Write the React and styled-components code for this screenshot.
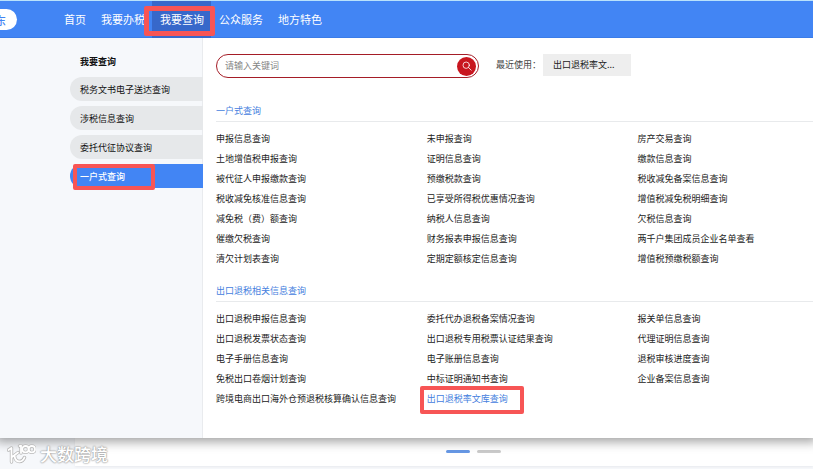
import React from "react";
import styled, { createGlobalStyle } from "styled-components";

const GlobalStyle = createGlobalStyle`
  *, *::before, *::after { box-sizing: border-box; }
  body {
    margin: 0;
    background: #ffffff;
    color: #222222;
    font: 9px/20px "Noto Sans CJK SC", sans-serif;
    overflow-x: hidden;
  }
  button, input { font: inherit; color: inherit; }
  a { color: inherit; text-decoration: none; white-space: nowrap; }
  ul { list-style: none; margin: 0; padding: 0; }
  h2, h3 { margin: 0; font-size: inherit; }
`;

const Header = styled.header`
  display: flex;
  align-items: stretch;
  height: 38px;
  border-top: 1px solid #b9e2fc;
  background: #4285f4;
  box-shadow: inset 0 -1px 0 #3b7ce8;
`;

const Region = styled.button`
  align-self: center;
  display: flex;
  align-items: center;
  justify-content: flex-end;
  width: 37px;
  height: 21px;
  margin-left: -20px;
  padding: 0 11px 0 0;
  border: 0;
  border-radius: 11px;
  background: #ffffff;
  color: #4285f4;
  font-size: 11px;
  font-weight: 500;
`;

const Nav = styled.nav`
  display: flex;
  margin-left: 39px;
`;

const NavLink = styled.a`
  position: relative;
  display: flex;
  align-items: center;
  padding: 0 7px 2px 8px;
  background: ${(p) => (p.$active ? "#3768ca" : "transparent")};
  color: #ffffff;
  font-size: 11px;
`;

const Callout = styled.span`
  position: absolute;
  z-index: 2;
  inset: ${(p) => p.$inset};
  border: ${(p) => p.$weight || 4}px solid #f75555;
  border-radius: 2px;
  pointer-events: none;
`;

const Panel = styled.div`
  position: relative;
  z-index: 1;
  display: grid;
  grid-template-columns: 203px minmax(0, 1fr);
  background: #ffffff;
  box-shadow: 0 0 10px 4px rgba(0, 0, 0, 0.36);
  clip-path: inset(0 0 -20px 0);
`;

const Sidebar = styled.aside`
  padding: 14px 0 0 70px;
  border-right: 1px solid #e9ebee;
  background: #f6f8fb;
`;

const SideTitle = styled.h2`
  padding-left: 10px;
  margin-bottom: 5px;
  color: #111111;
  font-weight: 700;
`;

const SideList = styled.ul`
  display: grid;
  gap: 5px;
  margin-right: -1px;
`;

const SideLink = styled.a`
  position: relative;
  display: block;
  height: 24px;
  padding: 1px 0 0 10px;
  border-radius: 12px 0 0 12px;
  background: ${(p) => (p.$active ? "#4285f4" : "#e6e8ea")};
  color: ${(p) => (p.$active ? "#ffffff" : "#111111")};
  font-weight: ${(p) => (p.$active ? 500 : 400)};
  line-height: 24px;
`;

const Content = styled.main`
  padding: 16px 0 29px 13px;
`;

const Toolbar = styled.div`
  display: flex;
  align-items: flex-start;
  margin-bottom: 23px;
`;

const SearchForm = styled.form`
  display: flex;
  align-items: center;
  width: 263px;
  height: 24px;
  padding: 0 2px 0 8px;
  border: 1px solid #a51d27;
  border-radius: 12px;
`;

const SearchInput = styled.input`
  flex: 1;
  min-width: 0;
  padding: 0;
  border: 0;
  outline: 0;
  background: transparent;
  &::placeholder { color: #858585; opacity: 1; }
`;

const SearchButton = styled.button`
  display: grid;
  place-items: center;
  width: 19px;
  height: 19px;
  padding: 0;
  border: 0;
  border-radius: 50%;
  background: #c8161f;
  color: #ffffff;
`;

const RecentLabel = styled.span`
  width: 47px;
  margin-left: 17px;
  color: #444444;
  line-height: 22px;
`;

const RecentChip = styled.button`
  width: 88px;
  height: 22px;
  padding: 0 10px;
  border: 0;
  background: #eeeeee;
  text-align: left;
`;

const Section = styled.section`
  & + & { margin-top: 12px; }
`;

const SectionTitle = styled.h3`
  border-bottom: 1px solid #e8eaec;
  margin-bottom: 7px;
  color: #4580de;
  font-weight: 400;
`;

const LinkGrid = styled.ul`
  display: grid;
  grid-template-columns: 6fr 6fr 5fr;
`;

const QueryLink = styled.a`
  position: relative;
  display: inline-block;
  color: ${(p) => (p.$active ? "#4580de" : "#222222")};
`;

const Footer = styled.footer`
  display: grid;
  grid-template-columns: 75px minmax(0, 1fr);
  height: 31px;
  background: #f6f8fb;
`;

const Brand = styled.div`
  position: relative;
  z-index: 2;
  display: flex;
  align-items: center;
  gap: 4px;
  padding-left: 7px;
  color: #ffffff;
  font-size: 17px;
  font-weight: 500;
  line-height: 28px;
  white-space: nowrap;
  text-shadow: 0 0 1px #a0a0a0, 0 0 2px #a0a0a0, 0 0 2px #b0b0b0;
`;

const Carousel = styled.div`
  display: flex;
  align-items: center;
  justify-content: center;
  gap: 7px;
  height: 28px;
  padding: 0 0 2px 58px;
  background: #ffffff;
  box-shadow: 0 1px 2px #e8eaed;
`;

const CarouselDot = styled.button`
  width: 24px;
  height: 3px;
  padding: 0;
  border: 0;
  border-radius: 2px;
  background: ${(p) => (p.$active ? "#6798e5" : "#cbcbcb")};
`;

const Mark = styled.svg`
  flex: none;
`;

function SearchIcon() {
  return (
    <svg width="10" height="10" viewBox="0 0 10 10" fill="none" stroke="currentColor" strokeWidth="0.8" strokeLinecap="round" aria-hidden="true">
      <circle cx="4.2" cy="4.2" r="3.2" />
      <path d="M6.6 6.6L9.2 9.2" />
    </svg>
  );
}

function BrandMark() {
  const lines = (
    <>
      <path d="M1.5 6L4.5 4V18M11 8.5L5 13M7.5 12C8 15.5 10 17.5 12.5 17.5C15 17.5 16.5 16 17.5 13.5" />
      <path d="M12.5 2L14 1.5V9" />
      <circle cx="18.5" cy="5.2" r="3.2" />
      <circle cx="24.8" cy="5.2" r="3.2" />
    </>
  );
  return (
    <Mark width="29" height="20" viewBox="0 0 29 20" fill="none" strokeLinecap="round" strokeLinejoin="round" aria-hidden="true">
      <g stroke="#b8b8b8" strokeWidth="3.4">{lines}</g>
      <g stroke="#ffffff" strokeWidth="1.8">{lines}</g>
    </Mark>
  );
}

const navItems = ["首页", "我要办税", "我要查询", "公众服务", "地方特色"];
const sideItems = ["税务文书电子送达查询", "涉税信息查询", "委托代征协议查询", "一户式查询"];
const sections = [
  {
    title: "一户式查询",
    links: [
      "申报信息查询", "未申报查询", "房产交易查询",
      "土地增值税申报查询", "证明信息查询", "缴款信息查询",
      "被代征人申报缴款查询", "预缴税款查询", "税收减免备案信息查询",
      "税收减免核准信息查询", "已享受所得税优惠情况查询", "增值税减免税明细查询",
      "减免税（费）额查询", "纳税人信息查询", "欠税信息查询",
      "催缴欠税查询", "财务报表申报信息查询", "两千户集团成员企业名单查看",
      "清欠计划表查询", "定期定额核定信息查询", "增值税预缴税额查询",
    ],
  },
  {
    title: "出口退税相关信息查询",
    links: [
      "出口退税申报信息查询", "委托代办退税备案情况查询", "报关单信息查询",
      "出口退税发票状态查询", "出口退税专用税票认证结果查询", "代理证明信息查询",
      "电子手册信息查询", "电子账册信息查询", "退税审核进度查询",
      "免税出口卷烟计划查询", "中标证明通知书查询", "企业备案信息查询",
      "跨境电商出口海外仓预退税核算确认信息查询", "出口退税率文库查询",
    ],
  },
];
const activeQuery = "出口退税率文库查询";

export default function App() {
  return (
    <>
      <GlobalStyle />
      <Header>
        <Region type="button">东</Region>
        <Nav>
          {navItems.map((name) => {
            const active = name === "我要查询";
            return (
              <NavLink href="#" key={name} $active={active}>
                {name}
                {active && <Callout $inset="5px -4px 2px -8px" $weight={5} />}
              </NavLink>
            );
          })}
        </Nav>
      </Header>
      <Panel>
        <Sidebar>
          <SideTitle>我要查询</SideTitle>
          <SideList>
            {sideItems.map((name) => {
              const active = name === "一户式查询";
              return (
                <li key={name}>
                  <SideLink href="#" $active={active}>
                    {name}
                    {active && <Callout $inset="0 48px -2px 3px" />}
                  </SideLink>
                </li>
              );
            })}
          </SideList>
        </Sidebar>
        <Content>
          <Toolbar>
            <SearchForm onSubmit={(e) => e.preventDefault()}>
              <SearchInput aria-label="请输入关键词" placeholder="请输入关键词" />
              <SearchButton type="submit" aria-label="搜索">
                <SearchIcon />
              </SearchButton>
            </SearchForm>
            <RecentLabel>最近使用：</RecentLabel>
            <RecentChip type="button">出口退税率文...</RecentChip>
          </Toolbar>
          {sections.map((section) => (
            <Section key={section.title}>
              <SectionTitle>{section.title}</SectionTitle>
              <LinkGrid>
                {section.links.map((name) => (
                  <li key={name}>
                    <QueryLink href="#" $active={name === activeQuery}>
                      {name}
                      {name === activeQuery && <Callout $inset="-3px -16px -5px -7px" />}
                    </QueryLink>
                  </li>
                ))}
              </LinkGrid>
            </Section>
          ))}
        </Content>
      </Panel>
      <Footer>
        <Brand>
          <BrandMark />
          <span>大数跨境</span>
        </Brand>
        <Carousel>
          <CarouselDot type="button" aria-label="1" $active />
          <CarouselDot type="button" aria-label="2" />
        </Carousel>
      </Footer>
    </>
  );
}
